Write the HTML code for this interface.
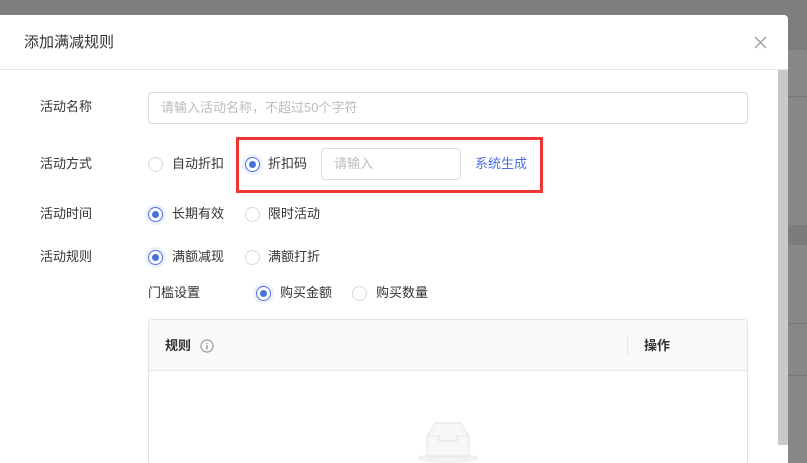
<!DOCTYPE html>
<html style="width:807px;height:463px;overflow:hidden"><head><meta charset="utf-8"><style>
*{margin:0;padding:0;box-sizing:border-box}
body{width:807px;height:463px;overflow:hidden;background:#7d7e80;font-family:"Liberation Sans","Noto Sans CJK SC",sans-serif;font-size:13px;color:#333;position:relative}
.abs{position:absolute}
.side{left:788px;width:19px;background:#888888}
.modal{left:0;top:15px;width:788px;height:448px;background:#fff;border-radius:0 4px 0 0}
.lbl{position:absolute;left:40px;font-size:13px;color:#333;line-height:16px}
.r{position:absolute;width:15px;height:15px;border-radius:50%;border:1px solid #d9d9d9;background:#fff}
.r.on{border-color:#4c6fe0;box-shadow:0 0 0 3px #eef1fc}
.r.on::after{content:"";position:absolute;left:3px;top:3px;width:7px;height:7px;border-radius:50%;background:#4c6fe0}
.t{position:absolute;line-height:16px;font-size:13px;color:#333}
.inp{position:absolute;border:1px solid #dcdcdc;border-radius:4px;color:#bbb;font-size:13px;padding-left:12px}
</style></head><body>
<div class="abs side" style="top:50px;height:413px"></div>
<div class="abs" style="left:788px;top:225px;width:19px;height:20px;background:#7c7c7e"></div>
<div class="abs" style="left:788px;top:96px;width:19px;height:1px;background:#777"></div>
<div class="abs" style="left:788px;top:323px;width:19px;height:1px;background:#777"></div>
<div class="abs" style="left:788px;top:375px;width:19px;height:1px;background:#777"></div>
<div class="abs modal"></div>
<div class="abs" style="left:24px;top:33px;font-size:15px;line-height:20px;color:#333">添加满减规则</div>
<svg class="abs" style="left:754px;top:36px" width="13" height="13"><path d="M1 1L12 12M12 1L1 12" stroke="#999" stroke-width="1.3"/></svg>
<div class="abs" style="left:0;top:69px;width:788px;height:1px;background:#e8e8e8"></div>
<div class="abs" style="left:778px;top:70px;width:10px;height:375px;background:#c9c9c9"></div>

<div class="lbl" style="top:99px">活动名称</div>
<div class="inp" style="left:148px;top:92px;width:600px;height:32px;line-height:30px">请输入活动名称，不超过50个字符</div>

<div class="lbl" style="top:156px">活动方式</div>
<div class="r" style="left:148px;top:157px"></div><div class="t" style="left:172px;top:156px">自动折扣</div>
<div class="r on" style="left:245px;top:157px"></div><div class="t" style="left:268px;top:156px">折扣码</div>
<div class="inp" style="left:321px;top:148px;width:140px;height:32px;line-height:30px">请输入</div>
<div class="t" style="left:475px;top:156px;color:#4c6fe0">系统生成</div>
<div class="abs" style="left:236px;top:137px;width:307px;height:56px;border:3px solid #f03535"></div>

<div class="lbl" style="top:206px">活动时间</div>
<div class="r on" style="left:148px;top:207px"></div><div class="t" style="left:172px;top:206px">长期有效</div>
<div class="r" style="left:245px;top:207px"></div><div class="t" style="left:268px;top:206px">限时活动</div>

<div class="lbl" style="top:249px">活动规则</div>
<div class="r on" style="left:148px;top:250px"></div><div class="t" style="left:172px;top:249px">满额减现</div>
<div class="r" style="left:245px;top:250px"></div><div class="t" style="left:268px;top:249px">满额打折</div>

<div class="t" style="left:148px;top:285px">门槛设置</div>
<div class="r on" style="left:256px;top:286px"></div><div class="t" style="left:280px;top:285px">购买金额</div>
<div class="r" style="left:352px;top:286px"></div><div class="t" style="left:376px;top:285px">购买数量</div>

<div class="abs" style="left:148px;top:319px;width:600px;height:144px;border:1px solid #e3e3e3;border-bottom:none;border-radius:4px 4px 0 0"></div>
<div class="abs" style="left:149px;top:320px;width:598px;height:51px;background:#fafafa;border-bottom:1px solid #e6e6e6;border-radius:4px 4px 0 0"></div>
<div class="t" style="left:165px;top:338px;font-weight:bold">规则</div>
<svg class="abs" style="left:200px;top:339px" width="14" height="14"><circle cx="7" cy="7" r="6" fill="none" stroke="#999" stroke-width="1.2"/><path d="M7 6V10.5M7 3.6V4.8" stroke="#999" stroke-width="1.4"/></svg>
<div class="abs" style="left:627px;top:336px;width:1px;height:20px;background:#e6e6e6"></div>
<div class="t" style="left:644px;top:338px;font-weight:bold">操作</div>
<svg class="abs" style="left:415px;top:418px" width="66" height="45"><ellipse cx="33" cy="40" rx="31" ry="5" fill="#f2f2f2"/><path d="M12 38V18L20 5H46L54 18V38Z" fill="#f7f7f7" stroke="#e3e3e3"/><path d="M12 18H24V23H42V18H54" fill="none" stroke="#e3e3e3"/></svg>
</body></html>
